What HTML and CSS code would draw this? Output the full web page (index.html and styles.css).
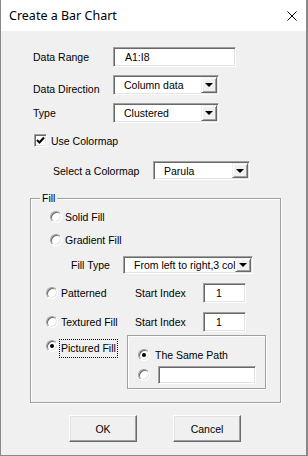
FILE: index.html
```html
<!DOCTYPE html>
<html>
<head>
  <title>Create a Bar Chart</title>
  <link rel="stylesheet" href="styles.css">
</head>
<body>
  <div class="window">
    <div class="titlebar">
      <span class="title">Create a Bar Chart</span>
      <svg class="close" width="10" height="10" viewBox="0 0 10 10">
        <path d="M0.5 0.5 L9.5 9.5 M9.5 0.5 L0.5 9.5" stroke="#000" stroke-width="1" fill="none"/>
      </svg>
    </div>

    <div class="client">
      <div class="row row-range">
        <span class="lbl lbl-main">Data Range</span>
        <div class="edit edit-range">A1:I8</div>
      </div>

      <div class="row row-dir">
        <span class="lbl lbl-main lbl-low">Data Direction</span>
        <div class="combo combo-dir">
          <span class="combo-text">Column data</span>
          <span class="combo-btn"><i class="tri"></i></span>
        </div>
      </div>

      <div class="row row-type">
        <span class="lbl lbl-main">Type</span>
        <div class="combo combo-dir">
          <span class="combo-text">Clustered</span>
          <span class="combo-btn"><i class="tri"></i></span>
        </div>
      </div>

      <div class="row row-check">
        <span class="checkbox">
          <svg width="9" height="9" viewBox="0 0 9 9">
            <path d="M1 4 L3.5 6.5 L8 1.5" stroke="#000" stroke-width="2" fill="none"/>
          </svg>
        </span>
        <span class="check-text">Use Colormap</span>
      </div>

      <div class="row row-cmap">
        <span class="lbl lbl-cmap">Select a Colormap</span>
        <div class="combo combo-cmap">
          <span class="combo-text">Parula</span>
          <span class="combo-btn"><i class="tri"></i></span>
        </div>
      </div>

      <div class="group group-fill">
        <span class="legend">Fill</span>

        <div class="opt opt-solid">
          <span class="radio"></span>
          <span class="opt-text">Solid Fill</span>
        </div>

        <div class="opt opt-grad">
          <span class="radio"></span>
          <span class="opt-text">Gradient Fill</span>
        </div>

        <div class="row row-filltype">
          <span class="lbl lbl-filltype">Fill Type</span>
          <div class="combo combo-filltype">
            <span class="combo-text">From left to right,3 colors</span>
            <span class="combo-btn"><i class="tri"></i></span>
          </div>
        </div>

        <div class="row row-index">
          <div class="opt opt-side">
            <span class="radio"></span>
            <span class="opt-text">Patterned</span>
          </div>
          <span class="lbl lbl-index">Start Index</span>
          <div class="edit edit-index">1</div>
        </div>

        <div class="row row-index row-index2">
          <div class="opt opt-side">
            <span class="radio"></span>
            <span class="opt-text">Textured Fill</span>
          </div>
          <span class="lbl lbl-index">Start Index</span>
          <div class="edit edit-index">1</div>
        </div>

        <div class="row row-pict">
          <div class="opt-pict">
            <span class="radio checked"></span>
            <span class="focus-text">Pictured Fill</span>
          </div>
          <div class="group group-path">
            <div class="opt opt-same">
              <span class="radio checked"></span>
              <span class="opt-text">The Same Path</span>
            </div>
            <div class="row row-path">
              <span class="radio"></span>
              <div class="edit edit-path"></div>
            </div>
          </div>
        </div>
      </div>

      <div class="row row-buttons">
        <button class="btn">OK</button>
        <button class="btn">Cancel</button>
      </div>
    </div>
  </div>
</body>
</html>
```

FILE: styles.css
```css
body {
  margin: 0;
  font-family: "Liberation Sans", Arial, sans-serif;
  font-size: 10.5px;
  color: #000;
  background: #f0f0f0;
}

.window {
  width: 308px;
  height: 456px;
  box-sizing: border-box;
  border-left: 1px solid #888;
  border-right: 2px solid #888;
  border-bottom: 1px solid #888;
  background: #f0f0f0;
  display: flex;
  flex-direction: column;
}

/* title bar */
.titlebar {
  height: 31px;
  background: #fff;
  display: flex;
  align-items: center;
  justify-content: space-between;
  padding: 0 9px 0 8px;
}

.title {
  font-family: "Noto Sans", "Liberation Sans", sans-serif;
  font-size: 12.5px;
  margin-top: -1px;
}

.close {
  display: block;
}

/* rows */
.row {
  display: flex;
  align-items: center;
}

.lbl {
  line-height: 12px;
  white-space: nowrap;
}

.row-range {
  margin: 16px 0 0 32px;
  height: 20px;
}

.row-dir {
  margin: 8px 0 0 32px;
  height: 20px;
}

.row-type {
  margin: 8px 0 0 32px;
  height: 20px;
}

.lbl-main {
  width: 80px;
}

.lbl-low {
  align-self: flex-end;
}

.row-check {
  margin: 11px 0 0 33px;
  height: 13px;
}

.row-cmap {
  margin: 14px 0 0 52px;
  height: 19px;
}

.lbl-cmap {
  width: 100px;
}

/* sunken edit box */
.edit {
  box-sizing: border-box;
  height: 20px;
  background: #fff;
  border: 1px solid;
  border-color: #a0a0a0 #fff #fff #a0a0a0;
  box-shadow: inset 1px 1px 0 #696969, inset -1px -1px 0 #e3e3e3;
  padding-left: 11px;
  line-height: 18px;
  white-space: nowrap;
}

.edit-range {
  width: 123px;
}

.edit-index {
  width: 43px;
  padding-left: 12px;
}

.edit-path {
  width: 98px;
  height: 18px;
}

/* combo box */
.combo {
  box-sizing: border-box;
  height: 20px;
  display: flex;
  background: #fff;
  border: 1px solid;
  border-color: #a0a0a0 #fff #fff #a0a0a0;
  box-shadow: inset 1px 1px 0 #696969, inset -1px -1px 0 #e3e3e3;
  padding: 1px;
}

.combo-dir {
  width: 106px;
}

.combo-cmap {
  width: 97px;
  height: 19px;
}

.combo-filltype {
  width: 130px;
  height: 18px;
}

.combo-text {
  flex: 1;
  overflow: hidden;
  white-space: nowrap;
  padding-left: 9px;
  display: flex;
  align-items: center;
}

.combo-btn {
  width: 16px;
  box-sizing: border-box;
  background: #f0f0f0;
  border: 1px solid;
  border-color: #f0f0f0 #696969 #696969 #f0f0f0;
  box-shadow: inset 1px 1px 0 #fff, inset -1px -1px 0 #a0a0a0;
  display: flex;
  align-items: center;
  justify-content: center;
}

.tri {
  width: 0;
  height: 0;
  border-left: 4px solid transparent;
  border-right: 4px solid transparent;
  border-top: 4px solid #000;
}

/* checkbox and radios */
.checkbox {
  width: 13px;
  height: 13px;
  box-sizing: border-box;
  background: #fff;
  border: 1px solid;
  border-color: #a0a0a0 #fff #fff #a0a0a0;
  box-shadow: inset 1px 1px 0 #696969, inset -1px -1px 0 #e3e3e3;
  display: flex;
  align-items: center;
  justify-content: center;
}

.check-text {
  margin-left: 4px;
}

.radio {
  width: 12px;
  height: 12px;
  flex: none;
  box-sizing: border-box;
  border-radius: 50%;
  background: #fff;
  border: 1px solid;
  border-color: #a0a0a0 #fff #fff #a0a0a0;
  box-shadow: inset 1px 1px 0 #696969, inset -1px -1px 0 #e3e3e3;
  display: flex;
  align-items: center;
  justify-content: center;
}

.radio.checked::after {
  content: "";
  width: 4px;
  height: 4px;
  border-radius: 50%;
  background: #000;
}

.opt {
  display: flex;
  align-items: center;
  height: 12px;
}

.opt-text {
  margin-left: 3px;
  white-space: nowrap;
}

/* group boxes */
.group {
  box-sizing: border-box;
  border: 1px solid #a0a0a0;
  box-shadow: 1px 1px 0 #fff, inset 1px 1px 0 #fff;
  position: relative;
}

.group-fill {
  margin: 18px 0 0 29px;
  width: 251px;
  height: 205px;
}

.legend {
  position: absolute;
  top: -7px;
  left: 9px;
  padding: 0 2px;
  line-height: 13px;
  background: #f0f0f0;
}

.opt-solid {
  margin: 12px 0 0 19px;
}

.opt-grad {
  margin: 11px 0 0 19px;
}

.row-filltype {
  margin: 10px 0 0 40px;
  height: 18px;
}

.lbl-filltype {
  width: 52px;
}

.row-index {
  margin: 9px 0 0 15px;
  height: 20px;
}

.opt-side {
  width: 89px;
}

.lbl-index {
  width: 68px;
}

.row-pict {
  margin: 3px 0 0 15px;
  align-items: flex-start;
}

.opt-pict {
  width: 81px;
  display: flex;
  align-items: flex-start;
}

.opt-pict .radio {
  margin-top: 5px;
}

.focus-text {
  margin: 4px 0 0 1px;
  padding: 2px 1px;
  line-height: 13px;
  border: 1px dotted #000;
  white-space: nowrap;
}

.group-path {
  width: 139px;
  height: 54px;
}

.opt-same {
  margin: 13px 0 0 10px;
}

.opt-same .opt-text {
  margin-left: 5px;
}

.row-path {
  margin: 5px 0 0 10px;
  height: 18px;
}

.row-path .edit-path {
  margin-left: 8px;
}

/* buttons */
.row-buttons {
  margin: 12px 0 0 68px;
  gap: 36px;
}

.btn {
  width: 68px;
  height: 27px;
  box-sizing: border-box;
  font: inherit;
  color: #000;
  background: #f0f0f0;
  border: 1px solid;
  border-color: #fff #696969 #696969 #fff;
  box-shadow: inset -1px -1px 0 #a0a0a0, inset 1px 1px 0 #e3e3e3;
  padding: 0;
}
```
